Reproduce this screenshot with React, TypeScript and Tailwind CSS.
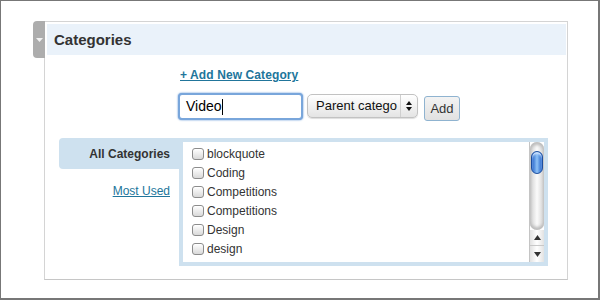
import React from "react";

const items = ["blockquote", "Coding", "Competitions", "Competitions", "Design", "design"];

function Checkbox() {
  return (
    <span className="inline-block w-[12px] h-[12px] shrink-0 rounded-[3px] border border-[#8c8c8c] bg-gradient-to-b from-white to-[#d9d9d9] shadow-[inset_0_1px_0_#fff]" />
  );
}

function Scrollbar() {
  return (
    <div className="w-[15px] flex flex-col border-l border-[#c4c4c4] bg-white">
      <div className="flex-1 flex flex-col rounded-b-[7px] rounded-t-[7px] bg-gradient-to-r from-[#cfcfcf] via-[#fbfbfb] to-[#d2d2d2] shadow-[inset_0_-3px_3px_#bdbdbd,inset_0_3px_3px_#bdbdbd]">
        <div className="mt-[9px] mx-[1px] h-[23px] rounded-[7px] border border-[#1c4fa0] bg-gradient-to-r from-[#1f5fc7] via-[#8fc2f6] to-[#1f5fc7] shadow-[inset_0_2px_2px_#cfe4ff]" />
      </div>
      <div className="h-[16px] flex items-center justify-center border-b border-[#c8c8c8] bg-gradient-to-r from-[#e2e2e2] via-white to-[#e2e2e2]">
        <svg width="7" height="5" viewBox="0 0 7 5">
          <path d="M3.5 0L7 5H0z" fill="#333" />
        </svg>
      </div>
      <div className="h-[16px] flex items-center justify-center bg-gradient-to-r from-[#e2e2e2] via-white to-[#e2e2e2]">
        <svg width="7" height="5" viewBox="0 0 7 5">
          <path d="M0 0H7L3.5 5z" fill="#333" />
        </svg>
      </div>
    </div>
  );
}

export default function App() {
  return (
    <div
      className="w-[600px] h-[300px] bg-white border-t border-l border-r-2 border-b-2 border-[#777] pl-[43px] pt-[20px]"
      style={{ fontFamily: '"Liberation Sans", Arial, sans-serif' }}
    >
      <div className="relative w-[524px] h-[259px] border border-[#d4d4d4] border-b-[#c6c6c6] p-[2px] pr-[1px]">
        <div className="absolute -left-[12px] -top-px w-[12px] h-[37px] rounded-l-[4px] bg-[#adadad] flex items-center justify-center">
          <svg width="7" height="4" viewBox="0 0 7 4">
            <path d="M0 0H7L3.5 4z" fill="#f2f2f2" />
          </svg>
        </div>

        <div className="h-[31px] bg-[#eaf2fa] pl-[7px] flex items-center">
          <h3 className="text-[15px] font-bold text-[#333] leading-none">Categories</h3>
        </div>

        <div className="pl-[133px] mt-[13px] text-[12px] leading-[14px]">
          <a href="#" className="font-bold text-[#21759b] underline tracking-[0.1px]">
            + Add New Category
          </a>
        </div>

        <div className="pl-[131px] mt-[11px] flex items-start">
          <div className="w-[125px] h-[27px] rounded-[4px] border-2 border-[#79a6db] shadow-[0_0_2px_#4b86d0] bg-white flex items-center pl-[6px] text-[14px] text-black">
            Video
            <span className="inline-block w-px h-[16px] bg-black" />
          </div>
          <div className="ml-[4px] mt-[1px] w-[111px] h-[24px] rounded-[5px] border border-[#c2c2c2] bg-gradient-to-b from-white to-[#e4e4e4] shadow-[0_1px_1px_#ddd] flex items-center text-[13px] text-[#111]">
            <span className="flex-1 pl-[8px]">Parent catego</span>
            <span className="w-[17px] h-full border-l border-[#cfcfcf] flex flex-col items-center justify-center gap-[2px]">
              <svg width="6" height="4" viewBox="0 0 6 4">
                <path d="M3 0L6 4H0z" fill="#111" />
              </svg>
              <svg width="6" height="4" viewBox="0 0 6 4">
                <path d="M0 0H6L3 4z" fill="#111" />
              </svg>
            </span>
          </div>
          <button className="ml-[6px] mt-[3px] w-[36px] h-[25px] rounded-[3px] border border-[#8fb3d0] bg-gradient-to-b from-[#f3f3f3] to-[#e1e1e1] text-[13px] text-[#333]">
            Add
          </button>
        </div>

        <div className="mt-[17px] ml-[12px] flex">
          <div className="w-[120px] flex flex-col">
            <div className="h-[31px] rounded-l-[4px] bg-[#cee1ef] flex items-center justify-end pr-[9px] text-[12px] font-bold text-[#333]">
              All Categories
            </div>
            <div className="mt-[15px] pr-[9px] text-right text-[12px] leading-[14px]">
              <a href="#" className="text-[#21759b] underline">
                Most Used
              </a>
            </div>
          </div>
          <div className="w-[369px] h-[128px] border-4 border-[#cee1ef] bg-white flex">
            <ul className="flex-1 pt-[2px] pl-[9px] overflow-hidden">
              {items.map((item, i) => (
                <li key={i} className="h-[19px] flex items-center gap-[3px] text-[12px] text-[#333]">
                  <Checkbox />
                  <span>{item}</span>
                </li>
              ))}
            </ul>
            <Scrollbar />
          </div>
        </div>
      </div>
    </div>
  );
}
